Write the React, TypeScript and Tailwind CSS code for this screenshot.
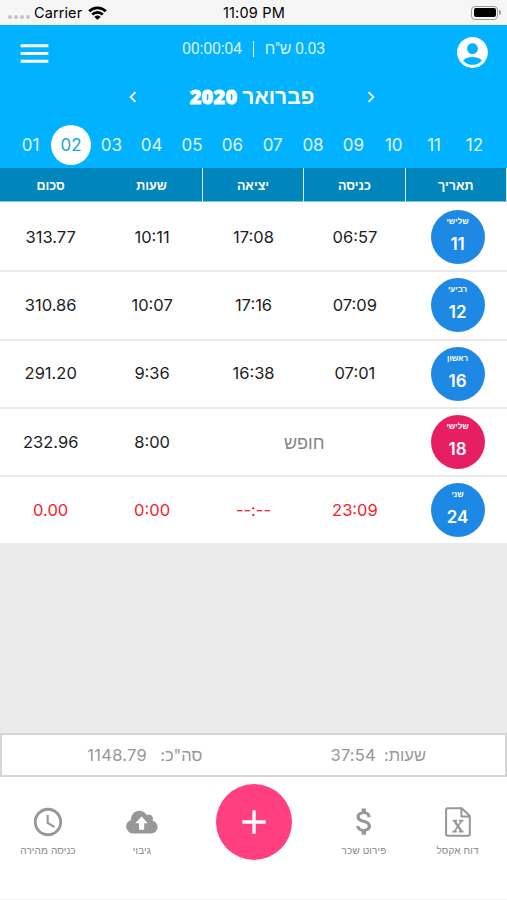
import clsx from 'clsx';
import { MdAccessTime, MdAccountCircle, MdAdd, MdAttachMoney, MdChevronLeft, MdChevronRight, MdMenu } from 'react-icons/md';

interface Shift {
  weekday: string;
  day: number;
  start?: string;
  end?: string;
  note?: string;
  hours: string;
  amount: string;
  open?: boolean;
}

const months = ['01', '02', '03', '04', '05', '06', '07', '08', '09', '10', '11', '12'];
const activeMonth = '02';

const columns = ['סכום', 'שעות', 'יציאה', 'כניסה', 'תאריך'];

const shifts: Shift[] = [
  { weekday: 'שלישי', day: 11, start: '06:57', end: '17:08', hours: '10:11', amount: '313.77' },
  { weekday: 'רביעי', day: 12, start: '07:09', end: '17:16', hours: '10:07', amount: '310.86' },
  { weekday: 'ראשון', day: 16, start: '07:01', end: '16:38', hours: '9:36', amount: '291.20' },
  { weekday: 'שלישי', day: 18, note: 'חופש', hours: '8:00', amount: '232.96' },
  { weekday: 'שני', day: 24, start: '23:09', end: '--:--', hours: '0:00', amount: '0.00', open: true },
];

function StatusBar() {
  return (
    <div className="grid h-[25px] grid-cols-3 items-center bg-[#f6f6f6] text-[14.5px] text-black">
      <div className="flex items-center pl-2">
        <div className="mt-2 flex gap-[2px]">
          {[0, 1, 2, 3].map((i) => (
            <span key={i} className="size-[4px] rounded-full bg-[#c4c4c4]" />
          ))}
        </div>
        <span className="ml-[4px] tracking-[0.1px]">Carrier</span>
        <svg className="ml-[6px] h-[14px] w-[19px]" viewBox="0 0 19 14" fill="none" stroke="currentColor" strokeWidth="2.7">
          <path d="M1.2 5.2a11.8 11.8 0 0 1 16.6 0" />
          <path d="M4.2 8.5a7.5 7.5 0 0 1 10.6 0" />
          <path d="M9.5 13.8 6.4 10.9a4.3 4.3 0 0 1 6.2 0z" fill="currentColor" stroke="none" />
        </svg>
      </div>
      <span className="pl-px text-center tracking-[0.2px]">11:09 PM</span>
      <div className="flex items-center justify-end pr-[6px]">
        <div className="h-[14px] w-[27px] rounded-[4px] border border-[#9b9b9b] p-[1.5px]">
          <div className="h-full rounded-[2px] bg-black" />
        </div>
        <span className="ml-px h-[5px] w-[2px] rounded-r bg-[#9b9b9b]" />
      </div>
    </div>
  );
}

function Header() {
  return (
    <header className="h-[143px] bg-[#00b2ff] text-white">
      <div className="flex h-[54px] items-center justify-between pr-[16px] pl-[16px]">
        <MdMenu className="mt-[2px] h-[39px] w-[37px]" />
        <div className="mb-[7px] flex items-center font-[Roboto,'Liberation_Sans',sans-serif] text-[16px] text-[#d9f3ff]">
          <span className="tracking-[-0.25px]">00:00:04</span>
          <span className="mr-[11px] ml-[11px] h-[16px] w-px bg-white" />
          <span dir="rtl" className="tracking-[-0.3px]">0.03 ש"ח</span>
        </div>
        <MdAccountCircle className="mt-px size-[37px]" />
      </div>
      <div className="flex h-[36px] items-center justify-center pr-[3px]">
        <MdChevronLeft className="size-[22px]" />
        <h1 dir="rtl" className="w-[216px] text-center font-[Inter,'Liberation_Sans',sans-serif] text-[21px] font-bold">
          פברואר{' '}
          <span className="font-['Open_Sans',sans-serif] text-[20px] font-extrabold tracking-[0.2px] [-webkit-text-stroke:0.8px_white]">
            2020
          </span>
        </h1>
        <MdChevronRight className="size-[22px]" />
      </div>
      <div className="flex h-[59px] items-center justify-center pr-[2px]">
        {months.map((month) => (
          <div key={month} className="flex w-[40.35px] justify-center">
            <span
              className={clsx(
                'flex size-[40px] shrink-0 items-center justify-center rounded-full pt-[2px] text-[17px]',
                month === activeMonth ? 'bg-white text-[#1ba4dd]' : 'text-[#e2f6ff]',
              )}
            >
              {month}
            </span>
          </div>
        ))}
      </div>
    </header>
  );
}

function TableHead() {
  return (
    <div className="grid h-[34px] grid-cols-5 bg-[#0085bd] text-[12.5px] font-bold text-white">
      {columns.map((label, i) => (
        <div
          key={label}
          className={clsx('flex items-center justify-center border-b border-[#7fc2de] pt-[3px]', i > 0 && 'border-r border-r-[#d5edf7]')}
        >
          {label}
        </div>
      ))}
    </div>
  );
}

function ShiftRow({ shift }: { shift: Shift }) {
  return (
    <div
      className={clsx(
        'grid h-[68.3px] grid-cols-5 items-center border-b-2 border-[#e9e9e9] bg-white text-center text-[16.5px] last:h-[66.3px] last:border-b-0',
        shift.open ? 'text-[#f5222a]' : 'text-[#1c1c1c]',
      )}
    >
      <span>{shift.amount}</span>
      <span>{shift.hours}</span>
      {shift.note ? (
        <span className="col-span-2 pt-px text-[18px] text-[#868686]">{shift.note}</span>
      ) : (
        <>
          <span>{shift.end}</span>
          <span>{shift.start}</span>
        </>
      )}
      <div
        className={clsx(
          'ml-[25px] flex size-[54px] flex-col items-center rounded-full text-white',
          shift.note ? 'bg-[#e81e63]' : 'bg-[#1e88e5]',
        )}
      >
        <span className="mt-[5px] text-[8px] leading-[12px] font-bold">{shift.weekday}</span>
        <span className="mt-[6px] text-[17px] leading-[22px] font-semibold">{shift.day}</span>
      </div>
    </div>
  );
}

function Totals() {
  return (
    <div className="grid h-[44px] grid-cols-2 items-center border-2 border-[#d5d5d5] bg-white pt-px text-[16.5px] text-[#979797]">
      <div dir="rtl" className="flex justify-center gap-[13px] pl-[34px]">
        <span>סה"כ:</span>
        <span className="tracking-[0.3px]">1148.79</span>
      </div>
      <div dir="rtl" className="flex justify-center gap-[8px] pr-[2px]">
        <span>שעות:</span>
        <span className="tracking-[0.2px]">37:54</span>
      </div>
    </div>
  );
}

function CloudIcon() {
  return (
    <svg className="h-[24px] w-[32px]" viewBox="0 0 32 24" fill="currentColor">
      <path
        fillRule="evenodd"
        d="M7.4 23.5A7 7 0 0 1 4.9 9.9C5 4.6 8.6.8 13.2.8c3.2 0 6 1.7 7.6 4.4 3.2-1.7 6.3.6 6.1 3.7 0 .7-.2 1.2-.4 1.8 3 .7 5 3.3 5 6.3 0 3.7-2.9 6.5-6.5 6.5zM13 19.7h5.2v-6.5h3.6L15.6 6.6l-6.3 6.6H13z"
      />
    </svg>
  );
}

function ExcelIcon() {
  return (
    <svg className="h-[30px] w-[26px]" viewBox="0 0 26 30" fill="none" stroke="currentColor" strokeWidth="2">
      <path d="M2.6 1.2h14.2L24.8 9v18.3a1.5 1.5 0 0 1-1.5 1.5H2.6a1.5 1.5 0 0 1-1.5-1.5V2.7a1.5 1.5 0 0 1 1.5-1.5z" />
      <path d="M16.4 1.4V9.4h8.2" />
      <path d="M9.3 13.6l7.4 11" strokeWidth="2.4" />
      <path d="M16.7 13.6l-7.4 11" strokeWidth="1.7" />
      <path d="M7.6 13.6h4.6M14 13.6h4.4M7.4 24.6h4.4M13.9 24.6h4.6" strokeWidth="1.7" />
    </svg>
  );
}

function Tab({ icon, label }: { icon: React.ReactNode; label: string }) {
  return (
    <div className="flex flex-col items-center pt-[20px] text-[#979797]">
      <div className="flex h-[35px] items-center">{icon}</div>
      <span className="mt-[3px] text-[10px] leading-[16px] tracking-[0.1px] whitespace-nowrap text-[#858585]">{label}</span>
    </div>
  );
}

function TabBar() {
  return (
    <nav className="grid h-[123px] grid-cols-[96px_92px_132px_88px_99px] items-start border-b border-[#f1f1f1] bg-white pt-[7px]">
      <Tab icon={<MdAccessTime className="size-[34px]" />} label="כניסה מהירה" />
      <Tab icon={<CloudIcon />} label="גיבוי" />
      <button className="flex size-[76px] items-center justify-center justify-self-center rounded-full bg-[#ff3f80] text-white">
        <MdAdd className="size-[40px]" />
      </button>
      <Tab icon={<MdAttachMoney className="size-[35px]" />} label="פירוט שכר" />
      <Tab icon={<ExcelIcon />} label="דוח אקסל" />
    </nav>
  );
}

export default function App() {
  return (
    <div className="flex h-[900px] w-[507px] flex-col overflow-hidden bg-[#ebebeb] font-[Inter,'Liberation_Sans',sans-serif]">
      <StatusBar />
      <Header />
      <TableHead />
      <div className="border-t-2 border-white">
        {shifts.map((shift) => (
          <ShiftRow key={shift.day} shift={shift} />
        ))}
      </div>
      <div className="flex-1" />
      <Totals />
      <TabBar />
    </div>
  );
}
